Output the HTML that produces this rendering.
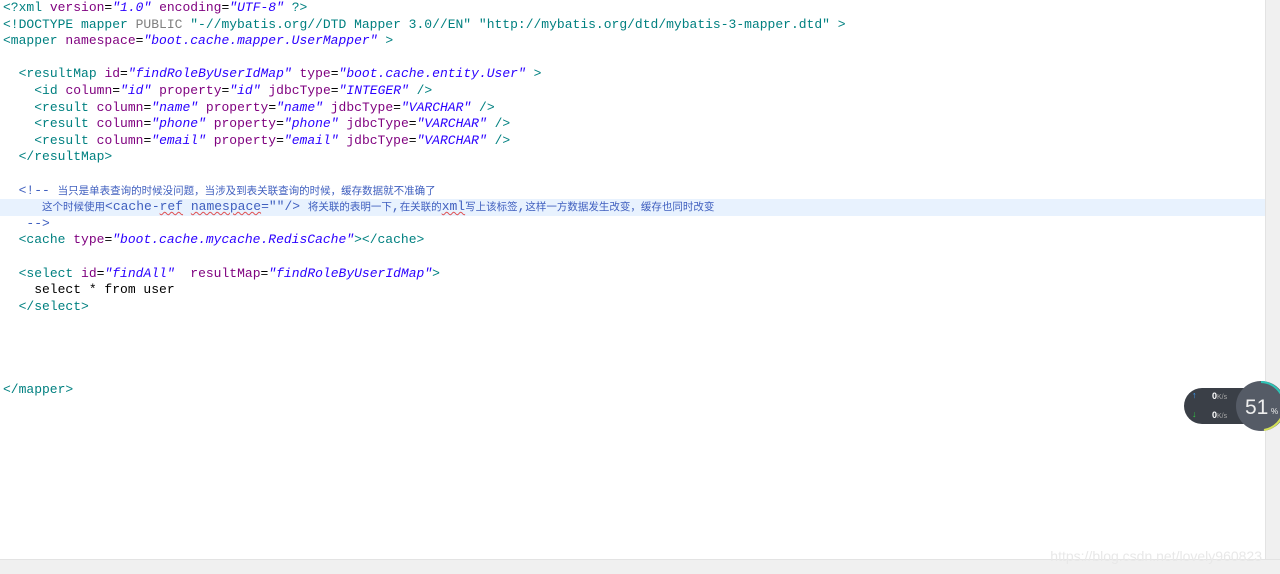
<!DOCTYPE html>
<html><head><meta charset="utf-8"><style>
body{margin:0;width:1280px;height:574px;overflow:hidden;background:#fff;position:relative;font-family:"Liberation Mono","Noto Sans CJK SC",monospace;}
.code{position:absolute;left:3px;top:0;font-size:13px;line-height:16.6px;color:#000;}
.l{height:16.6px;white-space:pre;}
.t{color:#008080}.a{color:#7f007f}.v{color:#2a00ff;font-style:italic}.c{color:#3f5fbf}.g{color:#808080}
.cn{font-family:"Noto Sans CJK SC",sans-serif;font-size:10.5px;}
.hl{position:absolute;left:0;top:199px;width:1266px;height:17px;background:#e8f2fe;}
.u{text-decoration:underline wavy #e05050;text-decoration-thickness:1px;}
.vs{position:absolute;right:0;top:0;width:14px;height:560px;background:#f0f0f0;border-left:1px solid #e3e3e3;}
.hs{position:absolute;left:0;bottom:0;width:1280px;height:14px;background:#f0f0f0;border-top:1px solid #e3e3e3;}
.wm{position:absolute;right:18px;bottom:10px;color:#e8e8e8;font-family:"Liberation Sans",sans-serif;font-size:14px;}
</style></head><body>
<div class="hl"></div>
<div class="code">
<div class="l"><span class="t">&lt;?xml </span><span class="a">version</span>=<span class="v">"1.0"</span> <span class="a">encoding</span>=<span class="v">"UTF-8"</span> <span class="t">?&gt;</span></div>
<div class="l"><span class="t">&lt;!DOCTYPE mapper </span><span class="g">PUBLIC</span> <span class="t">"-//mybatis.org//DTD Mapper 3.0//EN" "http://mybatis.org/dtd/mybatis-3-mapper.dtd" &gt;</span></div>
<div class="l"><span class="t">&lt;mapper </span><span class="a">namespace</span>=<span class="v">"boot.cache.mapper.UserMapper"</span> <span class="t">&gt;</span></div>
<div class="l"> </div>
<div class="l">  <span class="t">&lt;resultMap </span><span class="a">id</span>=<span class="v">"findRoleByUserIdMap"</span> <span class="a">type</span>=<span class="v">"boot.cache.entity.User"</span> <span class="t">&gt;</span></div>
<div class="l">    <span class="t">&lt;id </span><span class="a">column</span>=<span class="v">"id"</span> <span class="a">property</span>=<span class="v">"id"</span> <span class="a">jdbcType</span>=<span class="v">"INTEGER"</span> <span class="t">/&gt;</span></div>
<div class="l">    <span class="t">&lt;result </span><span class="a">column</span>=<span class="v">"name"</span> <span class="a">property</span>=<span class="v">"name"</span> <span class="a">jdbcType</span>=<span class="v">"VARCHAR"</span> <span class="t">/&gt;</span></div>
<div class="l">    <span class="t">&lt;result </span><span class="a">column</span>=<span class="v">"phone"</span> <span class="a">property</span>=<span class="v">"phone"</span> <span class="a">jdbcType</span>=<span class="v">"VARCHAR"</span> <span class="t">/&gt;</span></div>
<div class="l">    <span class="t">&lt;result </span><span class="a">column</span>=<span class="v">"email"</span> <span class="a">property</span>=<span class="v">"email"</span> <span class="a">jdbcType</span>=<span class="v">"VARCHAR"</span> <span class="t">/&gt;</span></div>
<div class="l">  <span class="t">&lt;/resultMap&gt;</span></div>
<div class="l"> </div>
<div class="l c">  &lt;!-- <span class="cn">当只是单表查询的时候没问题，当涉及到表关联查询的时候，缓存数据就不准确了</span></div>
<div class="l c">     <span class="cn">这个时候使用</span>&lt;cache-<span class="u">ref</span> <span class="u">namespace</span>=""/&gt; <span class="cn">将关联的表明一下</span>,<span class="cn">在关联的</span><span class="u">xml</span><span class="cn">写上该标签</span>,<span class="cn">这样一方数据发生改变，缓存也同时改变</span></div>
<div class="l c">   --&gt;</div>
<div class="l">  <span class="t">&lt;cache </span><span class="a">type</span>=<span class="v">"boot.cache.mycache.RedisCache"</span><span class="t">&gt;&lt;/cache&gt;</span></div>
<div class="l"> </div>
<div class="l">  <span class="t">&lt;select </span><span class="a">id</span>=<span class="v">"findAll"</span>  <span class="a">resultMap</span>=<span class="v">"findRoleByUserIdMap"</span><span class="t">&gt;</span></div>
<div class="l">    select * from user</div>
<div class="l">  <span class="t">&lt;/select&gt;</span></div>
<div class="l"> </div><div class="l"> </div><div class="l"> </div><div class="l"> </div>
<div class="l"><span class="t">&lt;/mapper&gt;</span></div>
</div>
<div class="vs"></div>
<div class="hs"></div>
<div class="wm">https://blog.csdn.net/lovely960823</div>
<div style="position:absolute;left:1184px;top:388px;width:80px;height:36px;border-radius:18px;background:#3a3f47;"></div>
<div style="position:absolute;left:1192px;top:390px;color:#3aa0ff;font-size:9px;font-family:'Liberation Sans',sans-serif;">&#8593;</div>
<div style="position:absolute;left:1192px;top:409px;color:#2ecc40;font-size:9px;font-family:'Liberation Sans',sans-serif;">&#8595;</div>
<div style="position:absolute;left:1212px;top:391px;color:#fff;font-size:9px;font-family:'Liberation Sans',sans-serif;"><b>0</b><span style="color:#aaa;font-size:7px">K/s</span></div>
<div style="position:absolute;left:1212px;top:410px;color:#fff;font-size:9px;font-family:'Liberation Sans',sans-serif;"><b>0</b><span style="color:#aaa;font-size:7px">K/s</span></div>
<svg style="position:absolute;left:1234px;top:379px" width="50" height="54"><circle cx="27" cy="27" r="25" fill="#555b66"/><path d="M27 3 A24 24 0 0 1 50 30" stroke="#2ec4b6" stroke-width="2" fill="none"/><path d="M50 30 A24 24 0 0 1 30 51" stroke="#d4e157" stroke-width="2" fill="none"/><text x="11" y="35" fill="#eee" font-size="21" font-family="Liberation Sans">51</text><text x="37" y="35" fill="#eee" font-size="8" font-family="Liberation Sans">%</text></svg>
</body></html>
